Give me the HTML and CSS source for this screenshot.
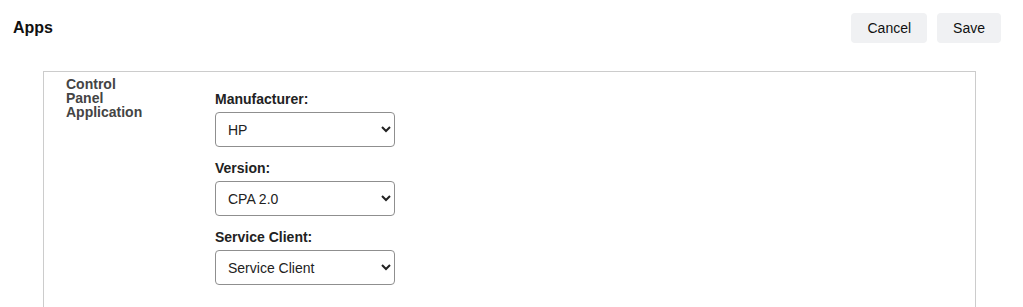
FILE: index.html
```html
<!doctype html>

<html lang="en">

<head>
  <meta charset="utf-8">
  <title>Apps</title>
  <link rel="stylesheet" href="styles.css">
</head>

<body>
  <div class="header">
    <div class="title">Apps</div>
    <div class="actions">
      <button class="btn">Cancel</button>
      <button class="btn">Save</button>
    </div>
  </div>

  <div class="panel">
    <div class="section_name">Control Panel Application</div>
    <div class="fields">
      <div class="field">
        <label for="manufacturer">Manufacturer:</label>
        <select id="manufacturer">
          <option>HP</option>
        </select>
      </div>
      <div class="field">
        <label for="version">Version:</label>
        <select id="version">
          <option>CPA 2.0</option>
        </select>
      </div>
      <div class="field">
        <label for="service_client">Service Client:</label>
        <select id="service_client">
          <option>Service Client</option>
        </select>
      </div>
    </div>
  </div>
</body>

</html>
```

FILE: styles.css
```css
body {
  margin: 0;
  font-family: "Liberation Sans", Arial, sans-serif;
  color: #222222;
  background: #FFFFFF;
}
.header {
  display: flex;
  justify-content: space-between;
  align-items: center;
  padding: 13px 22px 0 13px;
}
.title {
  font-size: 16px;
  font-weight: bold;
  color: #111111;
}
.actions {
  display: flex;
  gap: 10px;
}
.btn {
  height: 30px;
  padding: 0 16px;
  border: none;
  border-radius: 4px;
  background: #F0F1F3;
  font-family: inherit;
  font-size: 14px;
  color: #111111;
}
.panel {
  display: flex;
  margin: 28px 47px 0 43px;
  height: 235px;
  border: 1px solid #CCCCCC;
  border-bottom: none;
}
.section_name {
  width: 84px;
  margin: 5px 65px 0 22px;
  font-size: 14px;
  line-height: 14px;
  font-weight: bold;
  color: #444444;
}
.fields {
  padding-top: 18px;
}
.field {
  display: flex;
  flex-direction: column;
  margin-bottom: 12px;
}
.field label {
  font-size: 14px;
  line-height: 18px;
  font-weight: bold;
  margin-bottom: 4px;
}
.field select {
  width: 180px;
  height: 35px;
  padding: 0 8px;
  border: 1px solid #8F8F8F;
  border-radius: 4px;
  background: #FFFFFF;
  font-family: inherit;
  font-size: 14px;
  color: #222222;
}
```
